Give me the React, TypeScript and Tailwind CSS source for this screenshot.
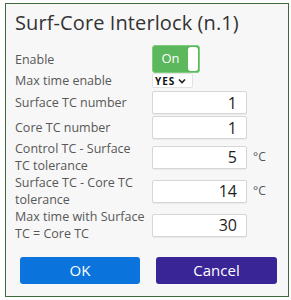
import React from "react";

const font = { fontFamily: '"Open Sans", "Noto Sans", sans-serif' };

const NumberField = ({ value, unit }: { value: string; unit?: boolean }) => (
  <div className="flex items-center">
    <div className="w-[95px] h-[23px] bg-white border border-[#d6d6d6] rounded-[2px] shadow-[0_1px_1px_rgba(0,0,0,0.06)] flex items-center justify-end pr-[9px] text-[16px] text-[#1e1e1e] leading-none">
      {value}
    </div>
    {unit && <span className="ml-[6px] text-[12px] text-[#555]">°C</span>}
  </div>
);

const Row = ({ label, children, className = "" }: { label: React.ReactNode; children: React.ReactNode; className?: string }) => (
  <div className={`flex items-center ${className}`}>
    <div className="w-[137px] text-[12.5px] leading-[17px] text-[#585858]">{label}</div>
    {children}
  </div>
);

export default function App() {
  return (
    <div className="w-[291px] h-[300px] bg-white pt-[3px] pl-[5px]" style={font}>
      <div className="w-[284px] h-[294px] border border-[#3f6a3c] bg-[#f7f7f7] px-[9px] pt-[6px]">
        <h1 className="text-[20px] leading-[26px] text-[#333] whitespace-nowrap tracking-[0.1px]">Surf-Core Interlock (n.1)</h1>

        <Row label="Enable" className="mt-[9px] h-[28px]">
          <div className="w-[48px] h-[28px] rounded-[3px] bg-[#5cb85c] border border-[#7fcc7f] flex items-center">
            <span className="flex-1 text-center text-white text-[13px] font-medium">On</span>
            <span className="w-[10px] h-[24px] bg-white rounded-[3px] mr-[1px]" />
          </div>
        </Row>

        <Row label="Max time enable" className="h-[15px]">
          <div className="w-[41px] h-[15px] bg-white border border-[#e2e2e2] rounded-[2px] flex items-center pl-[2px] gap-[3px]">
            <span className="text-[10px] font-bold tracking-[1px] text-[#111] leading-none">YES</span>
            <svg width="8" height="6" viewBox="0 0 8 6" className="mt-[1px]">
              <path d="M1 1.5 L4 4.5 L7 1.5" fill="none" stroke="#222" strokeWidth="1.6" />
            </svg>
          </div>
        </Row>

        <Row label="Surface TC number" className="mt-[3px] h-[23px]">
          <NumberField value="1" />
        </Row>
        <Row label="Core TC number" className="mt-[2px] h-[23px]">
          <NumberField value="1" />
        </Row>
        <Row label={<>Control TC - Surface<br />TC tolerance</>} className="mt-[1px] h-[34px]">
          <NumberField value="5" unit />
        </Row>
        <Row label={<>Surface TC - Core TC<br />tolerance</>} className="h-[34px]">
          <NumberField value="14" unit />
        </Row>
        <Row label={<>Max time with Surface<br />TC = Core TC</>} className="h-[34px]">
          <NumberField value="30" />
        </Row>

        <div className="flex gap-[16px] mt-[15px] pl-[5px]">
          <button className="w-[120px] h-[27px] rounded-[3px] bg-[#0a74dc] text-white text-[15px] font-medium">OK</button>
          <button className="w-[121px] h-[27px] rounded-[3px] bg-[#3a2597] text-white text-[15px] font-medium">Cancel</button>
        </div>
      </div>
    </div>
  );
}
